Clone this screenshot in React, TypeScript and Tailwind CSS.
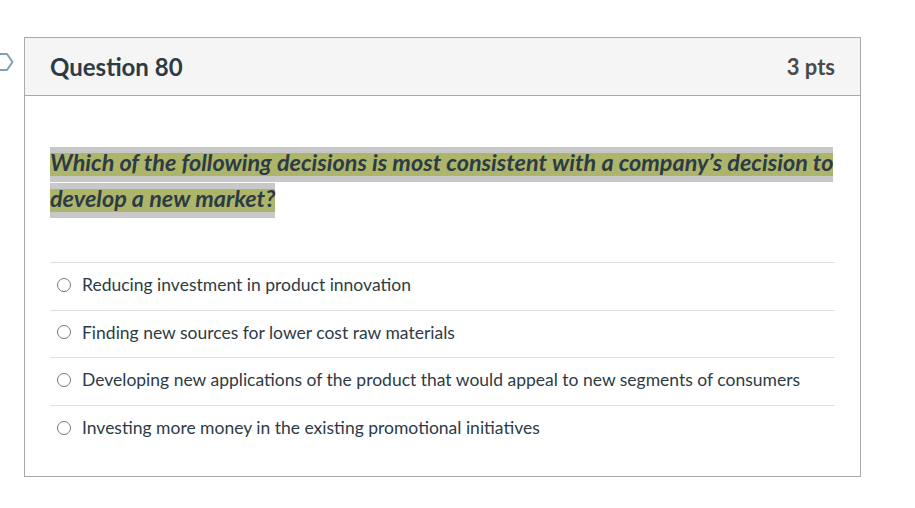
const options = [
  "Reducing investment in product innovation",
  "Finding new sources for lower cost raw materials",
  "Developing new applications of the product that would appeal to new segments of consumers",
  "Investing more money in the existing promotional initiatives",
];

function FlagIcon() {
  return (
    <svg
      className="absolute left-0 top-[52px]"
      width="16"
      height="20"
      viewBox="0 0 16 20"
      fill="none"
    >
      <path
        d="M-4 2 H7 L12.5 10 L7 18 H-4"
        stroke="#7f9fba"
        strokeWidth="2"
        strokeLinejoin="round"
      />
    </svg>
  );
}

export default function App() {
  return (
    <div className="relative h-[508px] w-[915px] overflow-hidden bg-white pt-[37px] pl-[24px] font-['Lato','Liberation_Sans',sans-serif] text-[#2d3b45]">
      <FlagIcon />
      <div className="w-[837px] border border-[#aaaaaa]">
        <div className="flex h-[58px] items-center justify-between border-b border-[#aaaaaa] bg-[#f5f5f5] px-[25px]">
          <h2 className="text-[24px] font-bold leading-none">Question 80</h2>
          <span className="text-[22px] font-bold leading-none text-[#4a4a4a]">
            3 pts
          </span>
        </div>

        <div className="px-[25px] pt-[48px] pb-[23px]">
          <p className="mr-[-6px] text-[23.4px] leading-[36px] font-bold italic">
            <span className="box-decoration-clone bg-[#c8c8c8] pt-[1px] pb-[6px]">
              <span className="box-decoration-clone bg-[linear-gradient(to_bottom,transparent_5px,#adb56b_5px)]">
                Which of the following decisions is most consistent with a
                company’s decision to develop a new market?
              </span>
            </span>
          </p>

          <ul className="mt-[46px]">
            {options.map((option) => (
              <li
                key={option}
                className="flex h-[47.67px] items-center border-t border-[#e0e0e0] pb-[3px] pl-[7px]"
              >
                <span className="h-[14px] w-[14px] shrink-0 rounded-full border border-[#777777] bg-white" />
                <span className="ml-[11px] text-[17.5px] leading-none">
                  {option}
                </span>
              </li>
            ))}
          </ul>
        </div>
      </div>
    </div>
  );
}
